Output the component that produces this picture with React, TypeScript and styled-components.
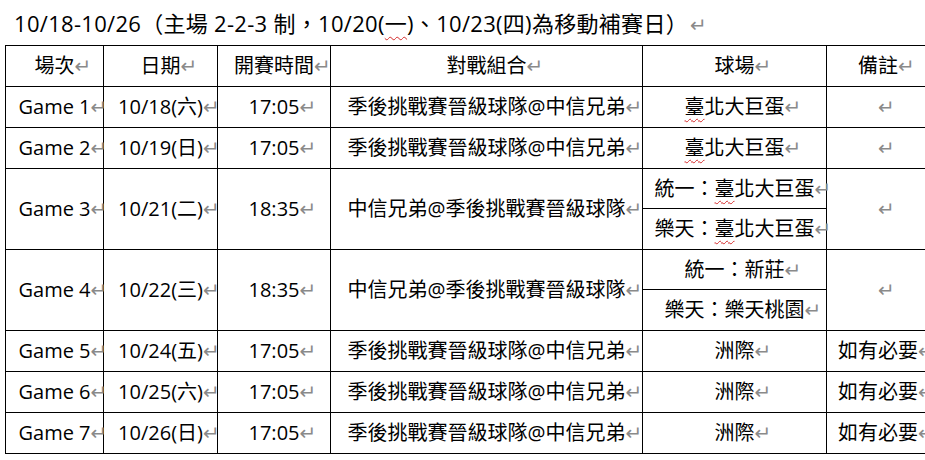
import styled, { createGlobalStyle } from 'styled-components';

type Game = {
  game: string;
  date: string;
  time: string;
  match: string;
  venues: string[];
  note: string;
};

const games: Game[] = [
  { game: 'Game 1', date: '10/18(六)', time: '17:05', match: '季後挑戰賽晉級球隊@中信兄弟', venues: ['臺北大巨蛋'], note: '' },
  { game: 'Game 2', date: '10/19(日)', time: '17:05', match: '季後挑戰賽晉級球隊@中信兄弟', venues: ['臺北大巨蛋'], note: '' },
  { game: 'Game 3', date: '10/21(二)', time: '18:35', match: '中信兄弟@季後挑戰賽晉級球隊', venues: ['統一：臺北大巨蛋', '樂天：臺北大巨蛋'], note: '' },
  { game: 'Game 4', date: '10/22(三)', time: '18:35', match: '中信兄弟@季後挑戰賽晉級球隊', venues: ['統一：新莊', '樂天：樂天桃園'], note: '' },
  { game: 'Game 5', date: '10/24(五)', time: '17:05', match: '季後挑戰賽晉級球隊@中信兄弟', venues: ['洲際'], note: '如有必要' },
  { game: 'Game 6', date: '10/25(六)', time: '17:05', match: '季後挑戰賽晉級球隊@中信兄弟', venues: ['洲際'], note: '如有必要' },
  { game: 'Game 7', date: '10/26(日)', time: '17:05', match: '季後挑戰賽晉級球隊@中信兄弟', venues: ['洲際'], note: '如有必要' },
];

const headers = ['場次', '日期', '開賽時間', '對戰組合', '球場', '備註'];
const widths = [98, 114, 113, 312, 184, 103];

const GlobalStyle = createGlobalStyle`
  html, body {
    margin: 0;
    padding: 0;
    background: #fff;
    overflow: hidden;
  }
  body {
    font-family: "Open Sans", "Noto Sans CJK TC", sans-serif;
    color: #000;
  }
`;

const Page = styled.div`
  padding: 8px 0 0 5px;
`;

const Title = styled.div`
  font-size: 22px;
  line-height: 30px;
  height: 30px;
  padding-left: 9px;
  margin-bottom: 7px;
  letter-spacing: 0.3px;
  white-space: nowrap;
`;

const Squiggle = styled.span`
  text-decoration: underline wavy #d42a2a;
  text-decoration-thickness: 1px;
  text-underline-offset: 4px;
`;

const Mark = styled.span<{ $inline?: boolean }>`
  display: inline-block;
  width: ${(p) => (p.$inline ? 'auto' : '0')};
  margin-left: ${(p) => (p.$inline ? '2px' : '0')};
  line-height: 1;
  white-space: nowrap;
  font-family: "DejaVu Sans", sans-serif;
  font-size: 20px;
  letter-spacing: 0;
  color: #8a8a8a;
  vertical-align: 0;
`;

const Table = styled.table`
  border-collapse: collapse;
  table-layout: fixed;
  width: 924px;
`;

const Row = styled.tr<{ $h: number }>`
  height: ${(p) => p.$h}px;
`;

const Cell = styled.td`
  border: 1px solid #000;
  padding: 0;
  text-align: center;
  vertical-align: middle;
  font-size: 20px;
  line-height: 24px;
  white-space: nowrap;
`;

function Text({ value }: { value: string }) {
  const parts = value.split('臺');
  return (
    <>
      {parts.map((p, i) => (
        <span key={i}>
          {i > 0 && <Squiggle>臺</Squiggle>}
          {p}
        </span>
      ))}
      <Mark>↵</Mark>
    </>
  );
}

export default function App() {
  return (
    <Page>
      <GlobalStyle />
      <Title>
        10/18-10/26（主場 2-2-3 制，10/20(<Squiggle>一</Squiggle>)、10/23(四)為移動補賽日）
        <Mark $inline>↵</Mark>
      </Title>
      <Table>
        <colgroup>
          {widths.map((w, i) => (
            <col key={i} style={{ width: w }} />
          ))}
        </colgroup>
        <tbody>
          <Row $h={41}>
            {headers.map((h) => (
              <Cell key={h}>
                <Text value={h} />
              </Cell>
            ))}
          </Row>
          {games.map((g) => {
            const span = g.venues.length;
            return [
              <Row $h={span > 1 ? 40 : 41} key={g.game}>
                <Cell rowSpan={span}>
                  <Text value={g.game} />
                </Cell>
                <Cell rowSpan={span}>
                  <Text value={g.date} />
                </Cell>
                <Cell rowSpan={span}>
                  <Text value={g.time} />
                </Cell>
                <Cell rowSpan={span}>
                  <Text value={g.match} />
                </Cell>
                <Cell>
                  <Text value={g.venues[0]} />
                </Cell>
                <Cell rowSpan={span}>
                  <Text value={g.note} />
                </Cell>
              </Row>,
              ...g.venues.slice(1).map((v) => (
                <Row $h={41} key={g.game + v}>
                  <Cell>
                    <Text value={v} />
                  </Cell>
                </Row>
              )),
            ];
          })}
        </tbody>
      </Table>
    </Page>
  );
}
